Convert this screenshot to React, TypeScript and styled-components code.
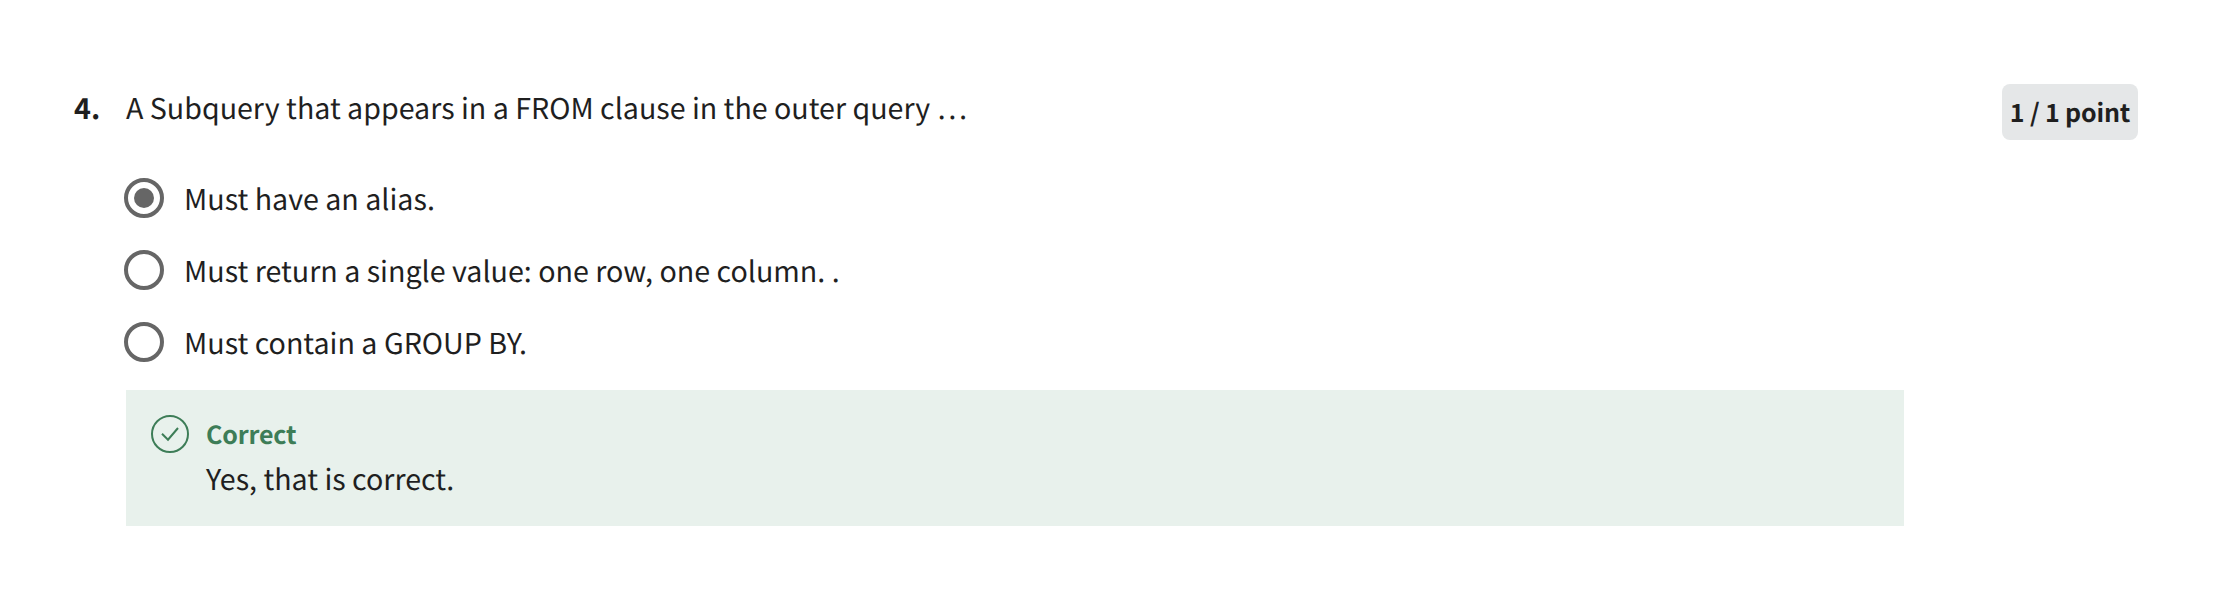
import React from 'react';
import styled, { createGlobalStyle } from 'styled-components';

const GlobalStyle = createGlobalStyle`
  body {
    margin: 0;
    background: #fff;
    color: #1f1f1f;
    font-family: 'Noto Sans CJK SC', 'Noto Sans', sans-serif;
    text-rendering: geometricPrecision;
  }
`;

const Page = styled.main`
  box-sizing: border-box;
  height: 608px;
  padding: 84px 96px 0 74px;
  display: flex;
  align-items: flex-start;
`;

const QuestionNumber = styled.div`
  width: 52px;
  font-size: 28.65px;
  font-weight: 700;
  line-height: 48px;
`;

const Content = styled.section`
  width: 1778px;
`;

const Prompt = styled.div`
  font-size: 28.62px;
  line-height: 48px;
  white-space: nowrap;
`;

const Options = styled.div`
  display: flex;
  flex-direction: column;
  gap: 32px;
  margin: 46px 0 28px -2px;
`;

const Option = styled.label`
  display: flex;
  height: 40px;
  gap: 20px;
`;

const Radio = styled.span`
  box-sizing: border-box;
  width: 40px;
  height: 40px;
  border: 4px solid #666;
  border-radius: 50%;
  display: grid;
  place-items: center;
`;

const Dot = styled.span`
  width: 20px;
  height: 20px;
  border-radius: 50%;
  background: #666;
`;

const OptionText = styled.span`
  font-size: 28.65px;
  line-height: 42px;
  white-space: nowrap;
`;

const Feedback = styled.div`
  box-sizing: border-box;
  height: 136px;
  padding: 24px 24px 0;
  display: flex;
  gap: 16px;
  background: #e8f1ec;
`;

const FeedbackTitle = styled.div`
  color: #3d7d57;
  font-size: 25px;
  font-weight: 700;
  line-height: 40px;
  letter-spacing: -0.15px;
`;

const FeedbackText = styled.div`
  margin-top: 3px;
  font-size: 28.6px;
  line-height: 44px;
`;

const Badge = styled.div`
  width: 136px;
  height: 56px;
  margin-left: auto;
  border-radius: 8px;
  background: #e5e7e8;
  font-size: 25px;
  font-weight: 700;
  line-height: 56px;
  letter-spacing: -0.15px;
  text-align: center;
  white-space: nowrap;
`;

const options = [
  { text: 'Must have an alias.', selected: true },
  { text: 'Must return a single value: one row, one column. .', selected: false },
  { text: 'Must contain a GROUP BY.', selected: false },
];

export default function App() {
  return (
    <>
      <GlobalStyle />
      <Page>
        <QuestionNumber>4.</QuestionNumber>
        <Content>
          <Prompt>A Subquery that appears in a FROM clause in the outer query …</Prompt>
          <Options>
            {options.map((o) => (
              <Option key={o.text}>
                <Radio>{o.selected && <Dot />}</Radio>
                <OptionText>{o.text}</OptionText>
              </Option>
            ))}
          </Options>
          <Feedback>
            <svg width="40" height="40" viewBox="0 0 40 40" fill="none" stroke="#3d7d57" strokeWidth="2">
              <circle cx="20" cy="20" r="18" />
              <path d="M12 19.8 L18 25.7 L28 14" />
            </svg>
            <div>
              <FeedbackTitle>Correct</FeedbackTitle>
              <FeedbackText>Yes, that is correct.</FeedbackText>
            </div>
          </Feedback>
        </Content>
        <Badge>1 / 1 point</Badge>
      </Page>
    </>
  );
}
